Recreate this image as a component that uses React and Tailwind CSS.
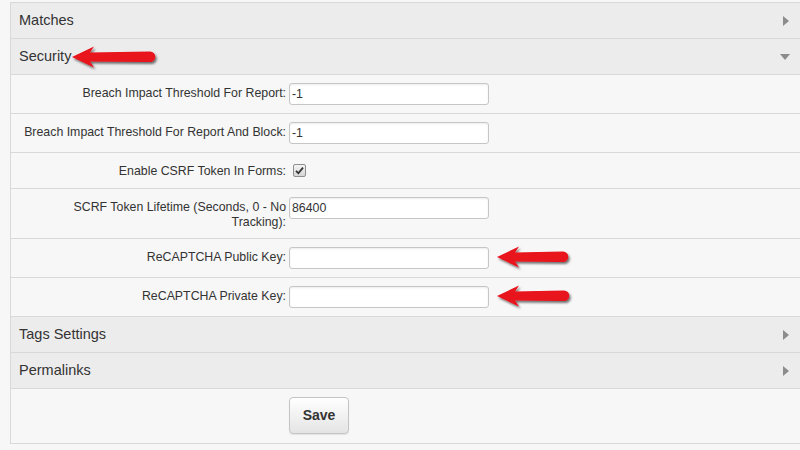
import React from 'react';

const Arrow = ({ length, className }) => {
  // tip at x=2, rounded tail at x=length
  const L = length;
  const d = `M2 12 L24 1.5 L20 7.5 L${L - 5} 6.5 A5 5 0 0 1 ${L - 5} 17 L20 16.5 L24 22.5 Z`;
  return (
    <svg width={L + 6} height="28" viewBox={`0 0 ${L + 6} 28`} className={className}>
      <defs>
        <filter id={`shadow-${L}`} x="-10%" y="-30%" width="130%" height="170%">
          <feDropShadow dx="1.5" dy="2" stdDeviation="1.2" floodColor="#000" floodOpacity="0.55" />
        </filter>
      </defs>
      <path d={d} fill="#e8121a" filter={`url(#shadow-${L})`} />
    </svg>
  );
};

const TriRight = () => (
  <svg width="6" height="10" viewBox="0 0 6 10" className="mr-[11px]">
    <polygon points="0,0 6,5 0,10" fill="#8c8c8c" />
  </svg>
);

const TriDown = () => (
  <svg width="10" height="6" viewBox="0 0 10 6" className="mr-[10px]">
    <polygon points="0,0 10,0 5,6" fill="#8c8c8c" />
  </svg>
);

const Header = ({ title, open }) => (
  <div className="h-[36px] border-b border-[#d9d9d9] bg-[#ececec] flex items-center justify-between pl-[8px]">
    <span className="text-[14.5px] text-[#333]">{title}</span>
    {open ? <TriDown /> : <TriRight />}
  </div>
);

const Label = ({ children, className = '' }) => (
  <label className={`block w-[262px] ml-[13px] mr-[3px] text-right text-[12.35px] leading-[15px] text-[#333] shrink-0 ${className}`}>
    {children}
  </label>
);

const FieldRow = ({ label, value = '' }) => (
  <div className="flex items-start py-2 border-b border-[#d9d9d9] bg-[#f7f7f7]">
    <Label className="pt-[3px]">{label}</Label>
    <input
      readOnly
      value={value}
      className="w-[200px] h-[22px] border border-[#c6c6c6] rounded-[3px] bg-white px-[2px] text-[12.35px] text-[#333] shadow-[inset_0_1px_2px_rgba(0,0,0,0.08)] outline-none"
    />
  </div>
);

const CheckRow = ({ label }) => (
  <div className="h-[36px] flex items-center border-b border-[#d9d9d9] bg-[#f7f7f7]">
    <Label className="pt-[1px]">{label}</Label>
    <span className="ml-[4px] w-[13px] h-[13px] border border-[#8f8f8f] rounded-[2px] bg-gradient-to-b from-[#f4f4f4] to-[#d6d6d6] flex items-center justify-center">
      <svg width="9" height="9" viewBox="0 0 9 9">
        <path d="M1 4.8 L3.4 7.2 L8 1.6" stroke="#333" strokeWidth="1.8" fill="none" />
      </svg>
    </span>
  </div>
);

export default function App() {
  return (
    <div className="relative w-[800px] h-[450px] overflow-hidden bg-[#f7f7f7] pl-[10px] pt-[2px] font-['Liberation_Sans',Arial,sans-serif]">
      <div className="border-l border-t border-b border-[#d9d9d9]">
        <Header title="Matches" />
        <Header title="Security" open />

        <FieldRow label="Breach Impact Threshold For Report:" value="-1" />
        <FieldRow label="Breach Impact Threshold For Report And Block:" value="-1" />
        <CheckRow label="Enable CSRF Token In Forms:" />
        <FieldRow label="SCRF Token Lifetime (Seconds, 0 - No Tracking):" value="86400" />
        <FieldRow label="ReCAPTCHA Public Key:" />
        <FieldRow label="ReCAPTCHA Private Key:" />

        <Header title="Tags Settings" />
        <Header title="Permalinks" />

        {/* Save */}
        <div className="pt-2 pb-[9px] bg-[#f7f7f7]">
          <button className="ml-[278px] w-[60px] h-[37px] border border-[#c4c4c4] rounded-[4px] bg-gradient-to-b from-white to-[#e4e4e4] text-[14px] font-bold text-[#333] shadow-[0_1px_1px_rgba(0,0,0,0.08)]">
            Save
          </button>
        </div>
      </div>

      {/* annotation arrows */}
      <Arrow length={85} className="absolute left-[70px] top-[45px]" />
      <Arrow length={73} className="absolute left-[495px] top-[245px]" />
      <Arrow length={74} className="absolute left-[495px] top-[284px]" />
    </div>
  );
}
